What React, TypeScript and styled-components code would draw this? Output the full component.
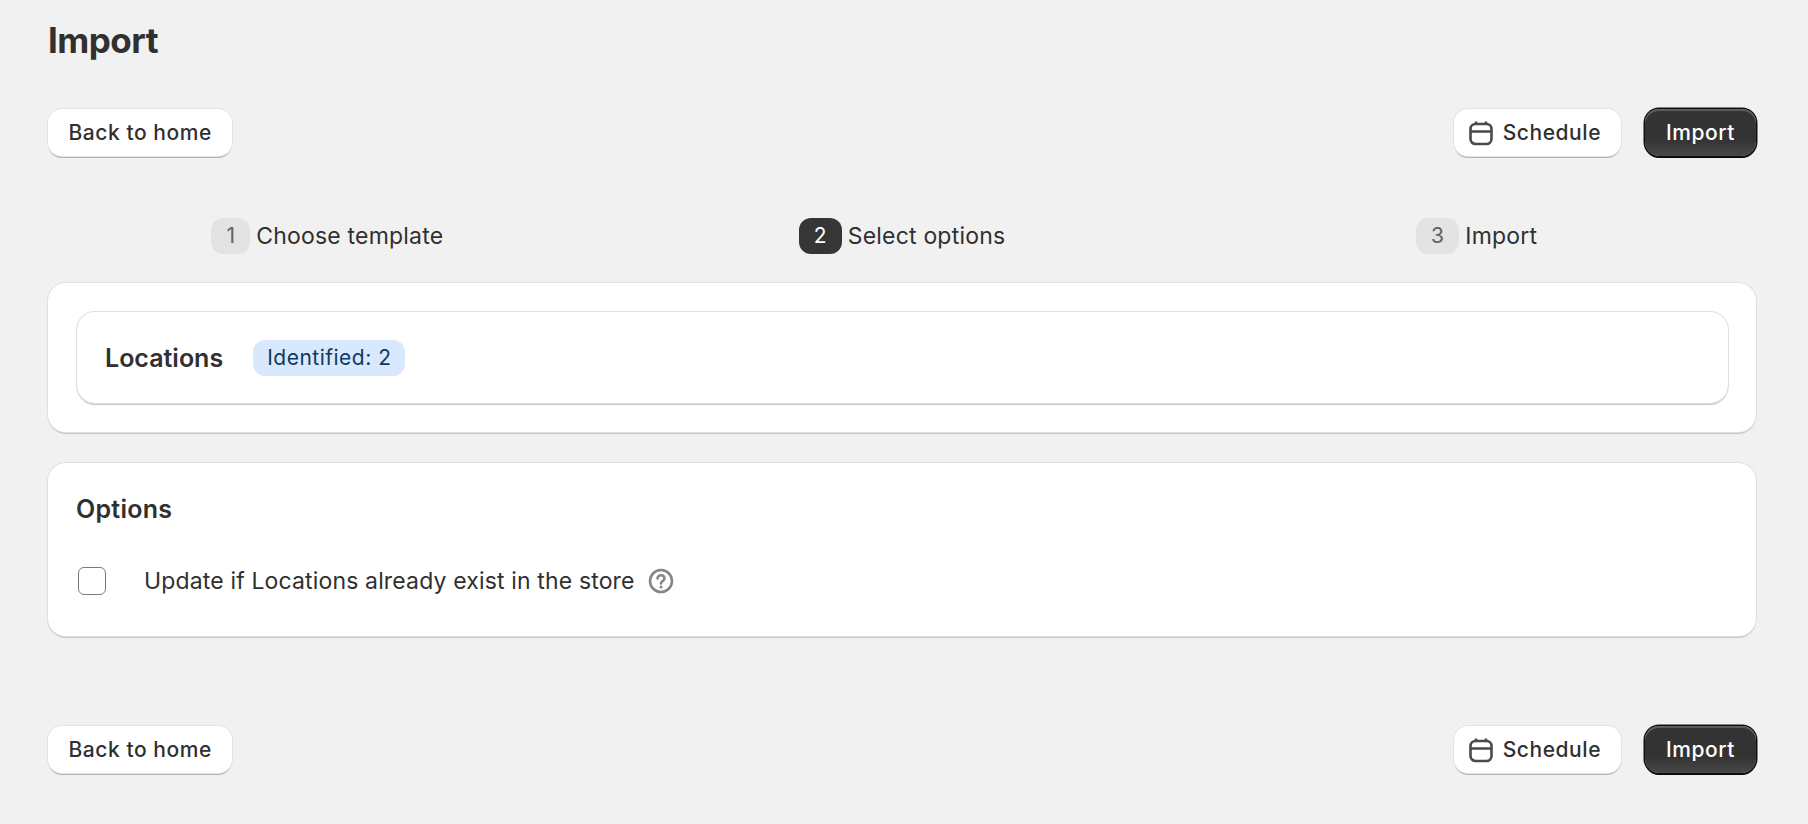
import React from 'react'
import styled, { createGlobalStyle } from 'styled-components'

const GlobalStyle = createGlobalStyle`
    html, body {
        margin: 0;
        padding: 0;
        background: #f1f1f1;
    }
    body {
        font-family: Inter, 'Noto Sans', sans-serif;
        color: #303030;
    }
`

const Page = styled.div`
    display: flex;
    flex-direction: column;
    height: 824px;
    box-sizing: border-box;
    overflow: hidden;
    padding: 16px 52px 0 48px;
`

const Title = styled.h1`
    margin: 0 0 45px;
    font-size: 35px;
    line-height: 48px;
    font-weight: 700;
    letter-spacing: -0.5px;
`

const Actions = styled.div<{ $bottom?: boolean }>`
    display: flex;
    align-items: center;
    justify-content: space-between;
    margin-top: ${p => (p.$bottom ? '90px' : '0')};
`

const ActionGroup = styled.div`
    display: flex;
    gap: 24px;
`

const Button = styled.button<{ $primary?: boolean }>`
    display: flex;
    align-items: center;
    justify-content: center;
    gap: 9px;
    height: 47px;
    box-sizing: border-box;
    padding: 0 ${p => (p.$primary ? '21px' : '20.5px')};
    border: none;
    border-radius: 14px;
    font-family: inherit;
    font-size: 21px;
    font-weight: 450;
    letter-spacing: 0.55px;
    color: ${p => (p.$primary ? '#fff' : '#303030')};
    background: ${p => (p.$primary ? 'linear-gradient(#333 65%, #484848)' : '#fff')};
    box-shadow: ${p =>
        p.$primary
            ? '0 0 0 1.5px #111, inset 0 2px 0 #5c5c5c, 0 2px 0 #000'
            : '0 0 0 1px #e3e3e3, 0 2px 0 #b5b5b5'};
`

const ScheduleButton = styled(Button)`
    padding: 0 20px 0 14px;
`

const Steps = styled.div`
    display: grid;
    grid-template-columns: repeat(3, 1fr);
    gap: 16px;
    margin: 62px 0 29px;
`

const Step = styled.div`
    display: flex;
    align-items: center;
    justify-content: center;
    gap: 6px;
    font-size: 23px;
    line-height: 36px;
    letter-spacing: 0.2px;
    color: #303030;
`

const StepNumber = styled.span<{ $active?: boolean }>`
    display: flex;
    align-items: center;
    justify-content: center;
    height: 36px;
    padding: 0 15px;
    border-radius: 12px;
    font-size: 21px;
    color: ${p => (p.$active ? '#fff' : '#616161')};
    background: ${p => (p.$active ? '#363636' : '#e3e3e3')};
`

const Card = styled.section`
    box-sizing: border-box;
    background: #fff;
    border-radius: 18px;
    box-shadow: 0 0 0 1px #dfdfdf, 0 2px 1px #c6c6c6;
`

const LocationsCard = styled(Card)`
    padding: 29px 28px 29px 29px;
`

const LocationsRow = styled.div`
    display: flex;
    align-items: center;
    gap: 30px;
    height: 91px;
    box-sizing: border-box;
    padding: 0 28px;
    border-radius: 18px;
    box-shadow: 0 0 0 1px #dfdfdf, 0 2px 1px #c6c6c6;
`

const LocationsTitle = styled.h2`
    margin: 0;
    font-size: 25px;
    font-weight: 600;
`

const Badge = styled.span`
    display: flex;
    align-items: center;
    height: 36px;
    padding: 0 14px;
    border-radius: 12px;
    font-size: 21px;
    letter-spacing: 0.5px;
    color: #0f3a5f;
    background: #d9e9fd;
`

const OptionsCard = styled(Card)`
    margin-top: 31px;
    height: 173px;
    padding: 32px 28px 0;
`

const OptionsTitle = styled.h2`
    margin: 0 0 42px;
    font-size: 25px;
    line-height: 28px;
    font-weight: 600;
    letter-spacing: 0.25px;
`

const OptionRow = styled.label`
    display: flex;
    align-items: center;
    font-size: 23px;
    line-height: 32px;
    letter-spacing: 0.15px;
`

const Checkbox = styled.span`
    flex: none;
    width: 28px;
    height: 28px;
    margin: 0 38px 0 2px;
    box-sizing: border-box;
    border: 1px solid #7a7a7a;
    border-radius: 6px;
    background: #fff;
`

const HelpIcon = styled.svg`
    flex: none;
    width: 28px;
    height: 28px;
    margin-left: 12px;
    color: #858585;
`

const Calendar = () => (
    <svg width="26" height="26" viewBox="0 0 26 26" fill="none" stroke="#4a4a4a" strokeWidth="2.6">
        <rect x="2.5" y="4" width="21" height="20" rx="5" />
        <path d="M2.5 11.5h21M8 1.5v3M18 1.5v3" />
    </svg>
)

const ButtonRow = ({ bottom }: { bottom?: boolean }) => (
    <Actions $bottom={bottom}>
        <Button>Back to home</Button>
        <ActionGroup>
            <ScheduleButton>
                <Calendar />
                Schedule
            </ScheduleButton>
            <Button $primary>Import</Button>
        </ActionGroup>
    </Actions>
)

const App = () => (
    <>
        <GlobalStyle />
        <Page>
            <Title>Import</Title>
            <ButtonRow />
            <Steps>
                <Step>
                    <StepNumber>1</StepNumber>
                    Choose template
                </Step>
                <Step>
                    <StepNumber $active>2</StepNumber>
                    Select options
                </Step>
                <Step>
                    <StepNumber>3</StepNumber>
                    Import
                </Step>
            </Steps>
            <LocationsCard>
                <LocationsRow>
                    <LocationsTitle>Locations</LocationsTitle>
                    <Badge>Identified: 2</Badge>
                </LocationsRow>
            </LocationsCard>
            <OptionsCard>
                <OptionsTitle>Options</OptionsTitle>
                <OptionRow>
                    <Checkbox />
                    Update if Locations already exist in the store
                    <HelpIcon viewBox="0 0 28 28" fill="none" stroke="currentColor" strokeWidth="2.6">
                        <circle cx="14" cy="14" r="11" />
                        <path d="M10.5 11.5c0-2 1.6-3.3 3.5-3.3s3.5 1.3 3.5 3.1c0 2.8-3.5 2.6-3.5 5.2" strokeLinecap="round" />
                        <circle cx="14" cy="20" r="1.5" fill="currentColor" stroke="none" />
                    </HelpIcon>
                </OptionRow>
            </OptionsCard>
            <ButtonRow bottom />
        </Page>
    </>
)

export default App
